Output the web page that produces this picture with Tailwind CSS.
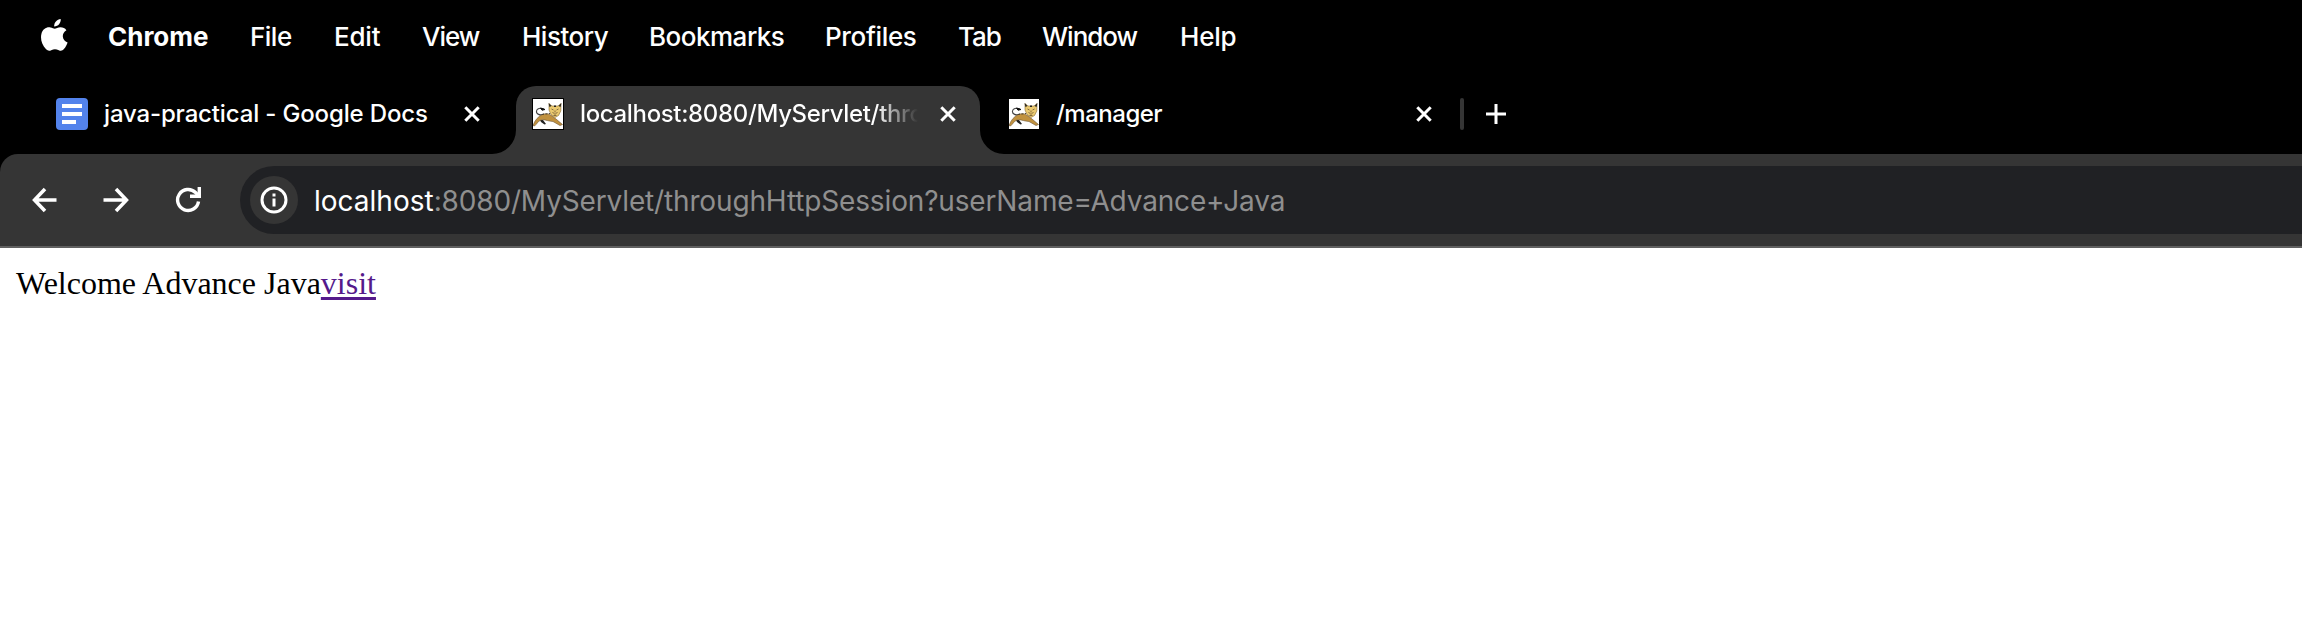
<!DOCTYPE html>
<html lang="en">
<head>
<meta charset="utf-8">
<title>localhost:8080/MyServlet</title>
<script src="https://cdn.jsdelivr.net/npm/@tailwindcss/browser@4"></script>
</head>
<body class="h-[628px] w-[2302px] overflow-hidden bg-white">
<svg class="hidden">
  <symbol id="cat" viewBox="0 0 30 30">
    <rect width="30" height="30" fill="#fff"/>
    <path d="M11 15C7 17 3 15 3.500 12C4 9.500 7 8.500 11 10" fill="none" stroke="#444" stroke-width="1.100"/>
    <path d="M7.500 9L12 10.500L9 11.200Z" fill="#111" stroke="#111"/>
    <path d="M7 21L10 21L13 25L11.500 25.500L8 23Z" fill="#222"/>
    <path d="M0 26.500C2 21 5 17.500 9.500 15.500C13 14 16 14.500 19 17L23 20L29.500 25.500L27 26.500L20 22.500C14 22 11 20 8 21C5 22 4 25 1.500 27Z" fill="#c0913f" stroke="#6b5330" stroke-width=".6"/>
    <path d="M9 15.500L17 14.500" stroke="#4a4030" stroke-width="1" stroke-dasharray="2 1.500"/>
    <path d="M16 4.500L19 7H25L28 4.500L27.800 12L25.500 16.500L22 18.500L18 15.500L16 11Z" fill="#eac970" stroke="#8a6c30" stroke-width=".6"/>
    <path d="M15.500 4L18.500 7L16.500 8Z M28.500 4L25.500 7L27.500 8Z M21 6.500H23V8H21Z" fill="#222"/>
    <path d="M18.500 10L20.500 11M23.500 11L25.500 10M22 11.500V13.500M19.500 13L22 15.500L24.500 13M20.500 16.500H23.500" stroke="#6b5330" stroke-width=".8" fill="none"/>
  </symbol>
  <symbol id="close" viewBox="0 0 16 16">
    <path d="M1.300 1.300L14.700 14.700M14.700 1.300L1.300 14.700" stroke="#fff" stroke-width="3" fill="none"/>
  </symbol>
</svg>
<div class="bg-black font-[Inter,sans-serif] text-white">
  <nav class="flex h-[74px] items-center pb-[2px] text-[26px] font-medium tracking-[-0.5px] whitespace-nowrap">
    <div class="w-[108px] shrink-0 pl-[41px]">
      <svg class="relative -top-[1px] h-[32px] w-[27px]" viewBox="0 0 27 32" fill="#fff">
        <path d="M19.700 0C20 3.800 17.200 7.500 13.200 7.500C12.800 3.900 16 .3 19.700 0Z"/>
        <path d="M25.400 11.200C22.500 13 21.500 15.500 21.900 18C22.200 20.500 23.800 22.600 26.600 23.500C25.800 26 24.500 28.300 22.900 30.100C21.500 31.700 19.900 32.200 17.800 31.200C15 29.900 12.800 30 10.200 31.200C8.300 32.100 6.700 31.900 5.100 30.300C.8 25.900-.8 19.800.4 14.900C1.700 10 5.700 7.700 9.500 8.500C11.200 8.900 12.700 9.700 13.700 9.700C14.900 9.700 17 8.300 19.500 8.300C22 8.300 24 9.200 25.400 11.200Z"/>
      </svg>
    </div>
    <span class="w-[142px] shrink-0 font-bold tracking-normal">Chrome</span>
    <span class="w-[84px] shrink-0">File</span>
    <span class="w-[88px] shrink-0 tracking-[-0.2px]">Edit</span>
    <span class="w-[100px] shrink-0 tracking-[-1px]">View</span>
    <span class="w-[127px] shrink-0">History</span>
    <span class="w-[176px] shrink-0">Bookmarks</span>
    <span class="w-[133px] shrink-0 tracking-[-0.350px]">Profiles</span>
    <span class="w-[84px] shrink-0 tracking-[-1px]">Tab</span>
    <span class="w-[138px] shrink-0 tracking-[-1px]">Window</span>
    <span class="tracking-[-0.200px]">Help</span>
  </nav>
  <div class="flex h-[80px] pt-3 text-2xl font-medium whitespace-nowrap">
    <div class="flex h-[56px] w-[516px] shrink-0 items-center pl-[56px]">
      <svg class="h-8 w-8 shrink-0" viewBox="0 0 32 32"><rect width="32" height="32" rx="4" fill="#5383ec"/><path d="M6 8H26M6 16H26M6 24H20" stroke="#fff" stroke-width="4"/></svg>
      <span class="ml-[16px] w-[360px] shrink-0 tracking-[-0.150px]">java-practical - Google Docs</span>
      <svg class="h-4 w-4 shrink-0"><use href="#close"/></svg>
    </div>
    <div class="relative h-[68px] w-[464px] shrink-0 rounded-t-[20px] bg-[#353535]">
      <svg class="absolute bottom-0 -left-[24px] h-6 w-6" viewBox="0 0 24 24" fill="#353535"><path d="M24 0A24 24 0 0 1 0 24H24Z"/></svg>
      <svg class="absolute bottom-0 -right-[24px] h-6 w-6" viewBox="0 0 24 24" fill="#353535"><path d="M0 0A24 24 0 0 0 24 24H0Z"/></svg>
      <div class="flex h-[56px] items-center pl-4">
        <svg class="h-8 w-8 shrink-0 border border-black"><use href="#cat"/></svg>
        <span class="ml-[16px] w-[352px] shrink-0 bg-linear-to-r from-white from-84% to-transparent to-96% bg-clip-text tracking-[-0.350px] text-transparent">localhost:8080/MyServlet/thro</span>
        <svg class="ml-[8px] h-4 w-4 shrink-0"><use href="#close"/></svg>
      </div>
    </div>
    <div class="flex h-[56px] items-center pl-[29px]">
      <svg class="h-[30px] w-[30px] shrink-0"><use href="#cat"/></svg>
      <span class="ml-[17px] w-[360px] shrink-0 tracking-[-0.500px]">/manager</span>
      <svg class="h-4 w-4 shrink-0"><use href="#close"/></svg>
      <div class="ml-[28px] h-8 w-1 rounded-full bg-[#353535]"></div>
      <svg class="ml-[22px] h-5 w-5" viewBox="0 0 20 20"><path d="M10 0V20M0 10H20" stroke="#fff" stroke-width="3"/></svg>
    </div>
  </div>
  <div class="flex h-[94px] items-center rounded-tl-[18px] border-b-2 border-[#606060] bg-[#353535]">
    <svg class="ml-[32px] h-[26px] w-[26px] shrink-0" viewBox="0 0 26 26" fill="none" stroke="#fff" stroke-width="3.500"><path d="M13 2L2.500 13L13 24M2.500 13H24.500"/></svg>
    <svg class="ml-[45px] h-[26px] w-[26px] shrink-0" viewBox="0 0 26 26" fill="none" stroke="#fff" stroke-width="3.500"><path d="M13 2L23.500 13L13 24M23.500 13H.5"/></svg>
    <svg class="ml-[46px] h-[26px] w-[27px] shrink-0" viewBox="0 0 27 26" fill="none" stroke="#fff" stroke-width="3.400"><path d="M23.500 14.500A10.500 10.500 0 1 1 20.500 5.500L24 9"/><path d="M24.300 0V9.300H15"/></svg>
    <div class="ml-[38px] flex h-[68px] grow items-center rounded-l-full bg-[#202124] pl-[10px]">
      <div class="flex h-12 w-12 items-center justify-center rounded-full bg-[#353535]">
        <svg class="h-7 w-7" viewBox="0 0 28 28" fill="none" stroke="#fff" stroke-width="3"><circle cx="14" cy="14" r="12"/><path d="M14 12.500V20.500M14 7.500V10.500"/></svg>
      </div>
      <div class="ml-[16px] pt-px text-[28px] whitespace-nowrap"><span>localhost</span><span class="tracking-[-0.150px] text-[#8f8f8f]">:8080/MyServlet/throughHttpSession?userName=Advance+Java</span></div>
    </div>
  </div>
</div>
<main class="px-4 pt-[15px] font-['Liberation_Serif',serif] text-[32px] leading-[40px] whitespace-nowrap text-black"><span>Welcome Advance Java</span><a class="text-[#551a8b] underline decoration-[3px] underline-offset-[3px]" href="#">visit</a></main>
</body>
</html>
